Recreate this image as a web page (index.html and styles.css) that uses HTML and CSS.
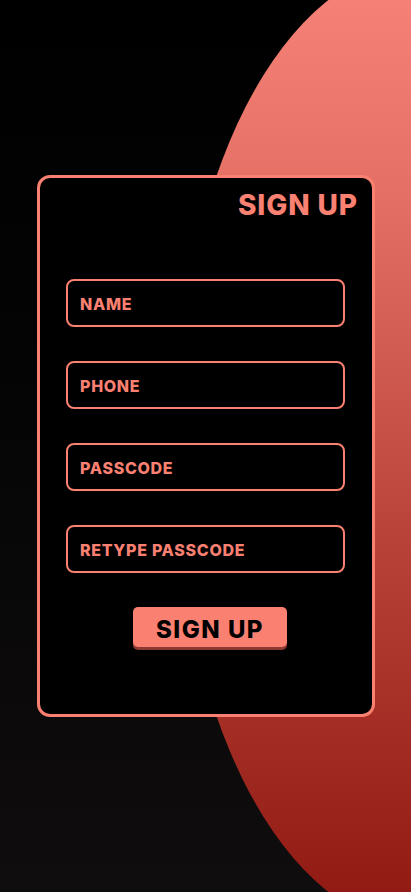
FILE: index.html
```html
<!DOCTYPE html>
<html lang="en">
<head>
<meta charset="utf-8">
<title>Sign Up</title>
<link rel="stylesheet" href="styles.css">
</head>
<body>
<div class="stage">
  <div class="blob"></div>
  <main class="card">
    <h1 class="title">SIGN UP</h1>
    <form class="form">
      <div class="field"><span class="label">NAME</span></div>
      <div class="field"><span class="label">PHONE</span></div>
      <div class="field"><span class="label">PASSCODE</span></div>
      <div class="field"><span class="label">RETYPE PASSCODE</span></div>
      <button type="button" class="btn">SIGN UP</button>
    </form>
  </main>
</div>
</body>
</html>
```
FILE: styles.css
```css
html, body {
  margin: 0;
  padding: 0;
  overflow: hidden;
}
.stage {
  width: 411px;
  height: 892px;
  overflow: hidden;
  position: relative;
  background: linear-gradient(to bottom, #000000 0%, #050404 40%, #0f0d0e 100%);
  font-family: "Inter", "Open Sans", sans-serif;
  box-sizing: border-box;
  padding: 175px 0 0 37px;
}
.blob {
  position: absolute;
  left: 174px;
  top: -34px;
  width: 490px;
  height: 960px;
  border-radius: 50%;
  background: linear-gradient(to bottom, #f8837a 0%, #e36f64 25%, #b84237 60%, #8e1811 100%);
}
.card {
  position: relative;
  width: 338px;
  height: 542px;
  box-sizing: border-box;
  border: 3px solid #fa8072;
  border-radius: 13px;
  background: #000;
  display: flex;
  flex-direction: column;
  padding: 10px 15px 0 26px;
}
.title {
  margin: 0;
  align-self: flex-end;
  color: #fa8072;
  font-size: 28px;
  line-height: 34px;
  font-weight: 800;
  letter-spacing: 0.9px;
  margin-right: -1px;
}
.form {
  display: flex;
  flex-direction: column;
  gap: 34px;
  margin-top: 57px;
}
.field {
  width: 279px;
  height: 48px;
  box-sizing: border-box;
  border: 2px solid #fa8072;
  border-radius: 8px;
  display: flex;
  align-items: center;
  padding: 2px 0 0 12px;
}
.label {
  color: #fa8072;
  font-size: 16px;
  font-weight: 800;
  letter-spacing: 0.7px;
}
.btn {
  align-self: flex-start;
  margin-left: 67px;
  width: 154px;
  height: 40px;
  border: none;
  border-radius: 5px;
  background: #fa8072;
  box-shadow: 0 3px 0 #8a3a33;
  color: #000;
  font-family: "Inter", "Open Sans", sans-serif;
  font-size: 24px;
  font-weight: 800;
  letter-spacing: 1.5px;
  padding: 5px 0 0 0;
  line-height: 30px;
  cursor: pointer;
}
```
